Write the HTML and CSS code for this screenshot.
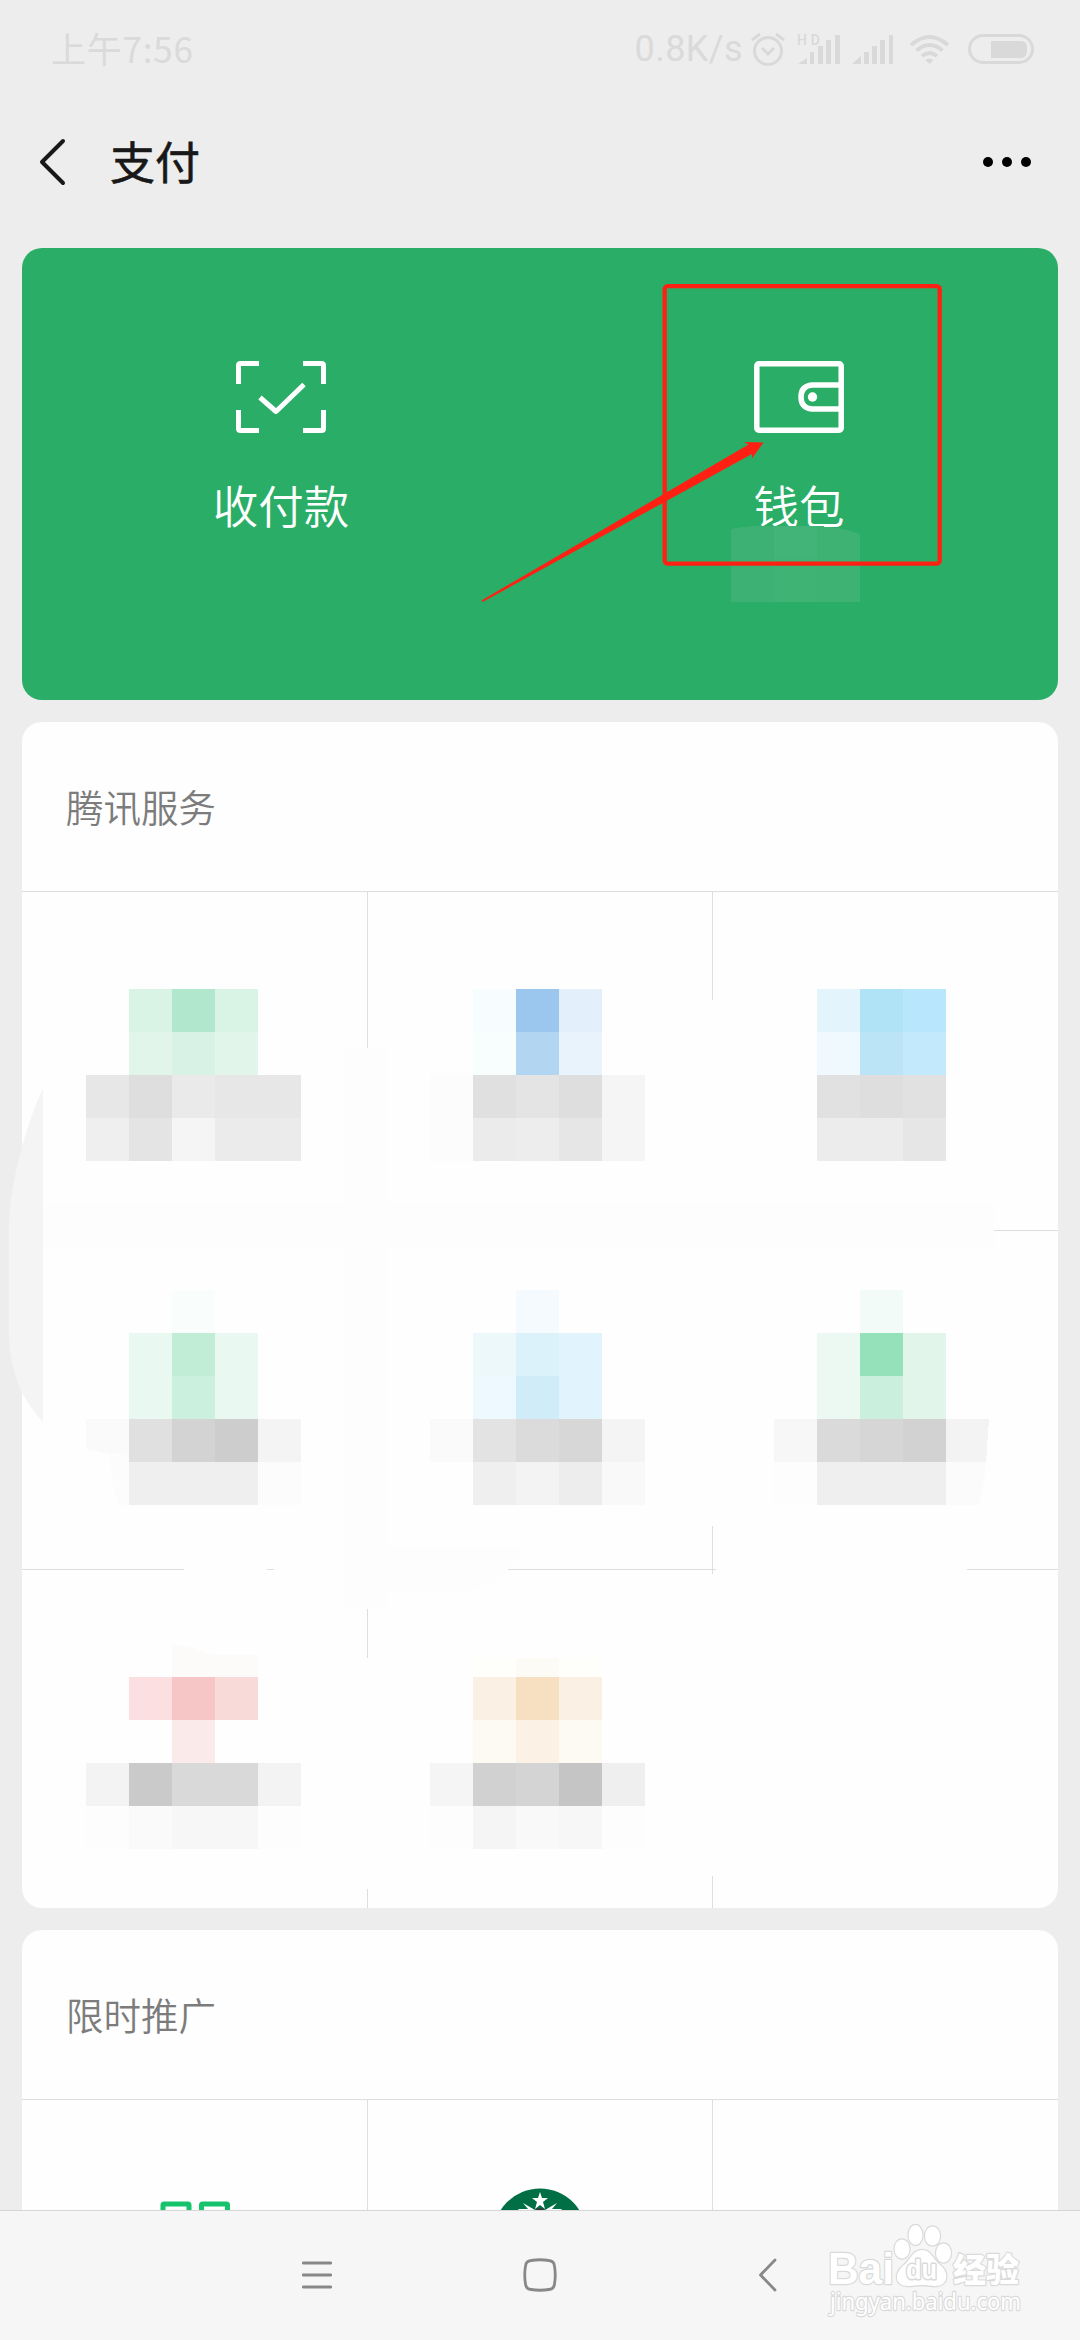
FILE: index.html
```html
<!DOCTYPE html>
<html lang="zh-CN">
<head>
<meta charset="utf-8">
<title>支付</title>
<link rel="stylesheet" href="styles.css">
</head>
<body>
<div class="screen">
  <header class="status">
    <span class="time">上午7:56</span>
    <span class="rate">0.8K/s</span>
    <svg class="status-icons" width="288" height="36" viewBox="0 0 288 36">
      <g fill="none" stroke="#d9d9d9" stroke-width="3">
        <circle cx="18" cy="20" r="13.5"/>
        <path d="M12 17l6 6 6-6M2 9l8-6M26 3l8 6"/>
        <rect x="219.500" y="4.500" width="63" height="27" rx="13.500"/>
        <path d="M161 14q18.500-16 37 0" stroke-width="4"/>
        <path d="M166.500 19.500q13-11 26 0" stroke-width="4"/>
        <path d="M172 25q7.500-6 15 0" stroke-width="4"/>
      </g>
      <g fill="#d9d9d9">
        <path d="M179.500 33l-4-4q4-3 8 0z"/>
        <path d="M241 10h30q6 0 6 6v3q0 8-6 8h-30z"/>
        <path d="M48 33l9-6v6zM60 21h4v12h-4zM68 15h5v18h-5zM76 9h5v24h-5zM85 4h5v29h-5z"/>
        <path d="M102 33l9-8v8zM114 21h5v12h-5zM122 15h5v18h-5zM130 9h5v24h-5zM139 4h4v29h-4z"/>
      </g>
      <text x="47" y="13.500" class="hd" textLength="23">HD</text>
    </svg>
  </header>
  <nav class="title-bar">
    <svg width="28" height="48" viewBox="0 0 28 48"><path d="M25 3L4 24l21 21" fill="none" stroke="#181818" stroke-width="4" stroke-linecap="round" stroke-linejoin="round"/></svg>
    <h1>支付</h1>
    <svg class="more" width="50" height="12" viewBox="0 0 50 12"><circle cx="6" cy="6" r="5"/><circle cx="25" cy="6" r="5"/><circle cx="44" cy="6" r="5"/></svg>
  </nav>
  <main>
    <section class="pay-card">
      <div class="pay-item">
        <svg width="90" height="72" viewBox="0 0 90 72" fill="none" stroke="#fff" stroke-width="5"><path d="M2.500 23V4.500q0-2 2-2H23M67 2.500h18.500q2 0 2 2V23M87.500 49v18.500q0 2-2 2H67M23 69.500H4.500q-2 0-2-2V49"/><path d="M24 36.500l16 14 28-27" stroke-linejoin="round"/></svg>
        <span>收付款</span>
      </div>
      <div class="pay-item">
        <svg width="90" height="72" viewBox="0 0 90 72" fill="none" stroke="#fff" stroke-width="5.500"><rect x="2.800" y="2.800" width="84.400" height="66.400" rx="2"/><path d="M87 24H58q-11 1-11 12t11 12h29"/><circle cx="58.500" cy="36" r="4.700" fill="#fff" stroke="none"/></svg>
        <span>钱包</span>
      </div>
    </section>
    <section class="card services">
      <h2>腾讯服务</h2>
      <div class="grid">
        <div></div><div></div><div></div>
        <div></div><div></div><div></div>
        <div></div><div></div><div></div>
      </div>
    </section>
    <section class="card promo">
      <h2>限时推广</h2>
      <div class="grid">
        <div><svg width="70" height="70" viewBox="0 0 70 70" fill="none" stroke="#14c36c" stroke-width="5"><rect x="3" y="3" width="26" height="26" rx="1"/><rect x="41.500" y="3" width="26" height="26" rx="1"/><rect x="3" y="41" width="26" height="26" rx="1"/></svg></div>
        <div><svg class="coffee" width="94" height="94" viewBox="0 0 94 94"><circle cx="47" cy="47" r="46.500" fill="#006f46"/><path d="M47 4l2 6h6l-5 4 2 7-5-4-5 4 2-7-5-4h6zM25 21l10 0-5-6 12 7q5-3 10 0l12-7-5 6h10L60 31H34z" fill="#fff"/><path d="M42 22q5-4 10 0v3H42z" fill="#333"/></svg></div>
        <div></div>
      </div>
    </section>
  </main>
  <footer class="nav-bar">
    <svg width="30" height="28" viewBox="0 0 30 28"><path d="M1.300 2h27.400M1.300 14h27.400M1.300 26h27.400"/></svg>
    <svg width="34" height="34" viewBox="0 0 34 34"><path d="M8 2.500Q17 1 26 2.500 31 3 31.500 8 33 17 31.500 26 31 31 26 31.500 17 33 8 31.500 3 31 2.500 26 1 17 2.500 8 3 3 8 2.500z"/></svg>
    <svg class="back" width="20" height="34" viewBox="0 0 20 34"><path d="M17 2L2.500 17 17 32"/></svg>
  </footer>

  <svg class="overlay" width="1080" height="2340" viewBox="0 0 1080 2340">
    <!-- smudged areas hiding the grid lines -->
    <g fill="#fefefe">
      <path d="M344 1048h43v561h-43zM344 1658h43v231h-43zM691 1000h43v526h-43zM691 1574h43v302h-43z"/>
      <path d="M43 1204h951v43H43zM184 1560h83v20h-83zM274 1560h230v20H274zM716 1560h251v20H716z"/>
    </g>
    <path d="M43 1204h951v43H43zM344 1048h43v156h-43zM344 1247h43v361h-43zM387 1548h140l-28 32-30 11h-82z" fill="#fdfdfd"/>
    <path d="M43 1089Q33 1108 22 1147 9 1195 9 1226V1340Q12 1390 43 1422z" fill="#f4f4f4"/>

    <g class="tiles">
      <path fill="#d9f3e5" d="M129 989h129v43H129z"/><path fill="#b1e8cd" d="M172 989h43v43h-43z"/>
      <path fill="#e1f5eb" d="M129 1032h129v43H129z"/><path fill="#d8f2e5" d="M172 1032h43v43h-43z"/>
      <path fill="#e7e7e7" d="M86 1075h43v43H86zM215 1075h86v43h-86z"/><path fill="#dedede" d="M129 1075h43v43h-43z"/><path fill="#eaeaea" d="M172 1075h43v43h-43z"/>
      <path fill="#efefef" d="M86 1118h43v43H86z"/><path fill="#e4e4e4" d="M129 1118h43v43h-43z"/><path fill="#f5f5f5" d="M172 1118h43v43h-43z"/><path fill="#ebebeb" d="M215 1118h86v43h-86z"/>

      <path fill="#f7fcff" d="M473 989h43v43h-43z"/><path fill="#9bc7ef" d="M516 989h43v43h-43z"/><path fill="#e3f0fb" d="M559 989h43v43h-43z"/>
      <path fill="#f8fefe" d="M473 1032h43v43h-43z"/><path fill="#b2d5f2" d="M516 1032h43v43h-43z"/><path fill="#e8f3fb" d="M559 1032h43v43h-43z"/>
      <path fill="#fcfcfc" d="M430 1075h43v86h-43z"/><path fill="#e0e0e0" d="M473 1075h43v43h-43z"/><path fill="#e4e4e4" d="M516 1075h43v43h-43z"/><path fill="#dedede" d="M559 1075h43v43h-43z"/><path fill="#f5f5f5" d="M602 1075h43v86h-43z"/>
      <path fill="#ebebeb" d="M473 1118h43v43h-43z"/><path fill="#ededed" d="M516 1118h43v43h-43z"/><path fill="#e6e6e6" d="M559 1118h43v43h-43z"/>

      <path fill="#e3f4fc" d="M817 989h43v43h-43z"/><path fill="#b1e3f7" d="M860 989h43v43h-43z"/><path fill="#b8e7fd" d="M903 989h43v43h-43z"/>
      <path fill="#f0f9fd" d="M817 1032h43v43h-43z"/><path fill="#bbe5f7" d="M860 1032h43v43h-43z"/><path fill="#c3e9fc" d="M903 1032h43v43h-43z"/>
      <path fill="#e1e1e1" d="M817 1075h129v43H817z"/><path fill="#dedede" d="M860 1075h43v43h-43z"/>
      <path fill="#ececec" d="M817 1118h86v43h-86z"/><path fill="#e6e6e6" d="M903 1118h43v43h-43z"/>

      <path fill="#f9fdfc" d="M172 1290h43v43h-43z"/><path fill="#e9f8f1" d="M129 1333h129v86H129z"/><path fill="#c1edd6" d="M172 1333h43v43h-43z"/><path fill="#cbf0de" d="M172 1376h43v43h-43z"/>
      <path fill="#fafafa" d="M86 1419h43v36l-19-1q-12-2-24-5z"/><path fill="#e0e0e0" d="M129 1419h43v43h-43z"/><path fill="#d3d3d3" d="M172 1419h43v43h-43z"/><path fill="#cdcdcd" d="M215 1419h43v43h-43z"/><path fill="#f4f4f4" d="M258 1419h43v43h-43z"/>
      <path fill="#fcfcfc" d="M110 1455h19v50h-10q-9-20-9-50zM258 1462h43v43h-43z"/><path fill="#efefef" d="M129 1462h129v43H129z"/>

      <path fill="#f4fafe" d="M516 1290h43v43h-43z"/><path fill="#ecf8fa" d="M473 1333h43v43h-43z"/><path fill="#dbf2fa" d="M516 1333h43v43h-43z"/><path fill="#e1f3fc" d="M559 1333h43v86h-43z"/><path fill="#edf9fe" d="M473 1376h43v43h-43z"/><path fill="#d0ecf9" d="M516 1376h43v43h-43z"/>
      <path fill="#fafafa" d="M430 1419h43v43h-43z"/><path fill="#e3e3e3" d="M473 1419h43v43h-43z"/><path fill="#dbdbdb" d="M516 1419h43v43h-43z"/><path fill="#d7d7d7" d="M559 1419h43v43h-43z"/><path fill="#f4f4f4" d="M602 1419h43v43h-43z"/>
      <path fill="#efefef" d="M473 1462h43v43h-43z"/><path fill="#f3f3f3" d="M516 1462h43v43h-43z"/><path fill="#ededed" d="M559 1462h43v43h-43z"/><path fill="#f9f9f9" d="M602 1462h43v43h-43z"/>

      <path fill="#f2fbf7" d="M860 1290h43v43h-43z"/><path fill="#ebf9f2" d="M817 1333h43v86h-43z"/><path fill="#94e1ba" d="M860 1333h43v43h-43z"/><path fill="#e2f5ea" d="M903 1333h43v86h-43z"/><path fill="#caefdd" d="M860 1376h43v43h-43z"/>
      <path fill="#f7f7f7" d="M774 1419h43v43h-43z"/><path fill="#dadada" d="M817 1419h43v43h-43z"/><path fill="#d6d6d6" d="M860 1419h43v43h-43z"/><path fill="#d2d2d2" d="M903 1419h43v43h-43z"/><path fill="#f3f3f3" d="M946 1419h43l-3 43h-40z"/>
      <path fill="#fdfdfd" d="M774 1462h43v43h-43z"/><path fill="#efefef" d="M817 1462h129v43H817z"/><path fill="#fbfbfb" d="M946 1462h40q-2 25-7 43h-33z"/>

      <path fill="#fdfbf9" d="M172 1645q25 2 40 10h46v22h-86z"/><path fill="#fbdfe1" d="M129 1677h43v43h-43z"/><path fill="#f6c6c7" d="M172 1677h43v43h-43z"/><path fill="#f8dad8" d="M215 1677h43v43h-43z"/><path fill="#faeaea" d="M172 1720h43v43h-43z"/>
      <path fill="#f3f3f3" d="M86 1763h43v43H86zM258 1763h43v43h-43z"/><path fill="#cacaca" d="M129 1763h43v43h-43z"/><path fill="#d9d9d9" d="M172 1763h86v43h-86z"/>
      <path fill="#fdfdfd" d="M86 1806h43v43H86zM258 1806h43v43h-43z"/><path fill="#fafafa" d="M129 1806h43v43h-43z"/><path fill="#f7f7f7" d="M172 1806h86v43h-86z"/>

      <path fill="#fefefb" d="M473 1658h129v19H473z"/><path fill="#fcfbf6" d="M516 1658h43v19h-43z"/><path fill="#fbf0e4" d="M473 1677h129v43H473z"/><path fill="#f7e0c2" d="M516 1677h43v43h-43z"/>
      <path fill="#fdfaf4" d="M473 1720h129v43H473z"/><path fill="#fbf1e5" d="M516 1720h43v43h-43z"/>
      <path fill="#f5f5f5" d="M430 1763h43v43h-43z"/><path fill="#d1d1d1" d="M473 1763h43v43h-43z"/><path fill="#d4d4d4" d="M516 1763h43v43h-43z"/><path fill="#c5c5c5" d="M559 1763h43v43h-43z"/><path fill="#efefef" d="M602 1763h43v43h-43z"/>
      <path fill="#fdfdfd" d="M430 1806h215v43H430z"/><path fill="#f5f5f5" d="M473 1806h43v43h-43z"/><path fill="#f9f9f9" d="M516 1806h43v43h-43z"/><path fill="#f7f7f7" d="M559 1806h43v43h-43z"/>

      <path fill="#3cb173" d="M731 529q20-4 43-3v76h-43z"/><path fill="#43b477" d="M774 526h43v33h-43z"/><path fill="#3fb374" d="M774 559h43v43h-43z"/><path fill="#3eb273" d="M817 526q25 1 43 8v68h-43z"/>
    </g>

    <rect x="664.700" y="286.200" width="275" height="277.500" rx="3" fill="none" stroke="#fe2113" stroke-width="4.300"/>
    <path d="M763.500 442.500L744 442l4.500 2.500L481.500 600.500l1 1.500L752 454v4.500z" fill="#fe2113"/>

    <g class="watermark">
      <text x="828" y="2284" class="wm-brand" textLength="66" lengthAdjust="spacingAndGlyphs">Bai</text>
      <g>
        <ellipse cx="902" cy="2249" rx="7.500" ry="9.500"/><ellipse cx="915.500" cy="2235" rx="7" ry="10"/><ellipse cx="932.500" cy="2236" rx="7.500" ry="9.500"/><ellipse cx="943.500" cy="2253" rx="7.500" ry="9.500"/>
        <path d="M922 2250c9 0 11 9 17 14 11 8 9 22-3 22-7 0-8-1-14-1s-8 1-14 1c-13 0-15-12-4-21 7-6 9-15 18-15z"/>
      </g>
      <text x="906" y="2279" class="wm-du" textLength="31" lengthAdjust="spacingAndGlyphs">du</text>
      <text x="953" y="2282" class="wm-cn">经验</text>
      <text x="830" y="2310" class="wm-url" textLength="191" lengthAdjust="spacingAndGlyphs">jingyan.baidu.com</text>
    </g>
  </svg>
</div>
</body>
</html>
```
FILE: styles.css
```css
* { box-sizing: border-box; }
body { margin: 0; background: #ededed; font-family: "Noto Sans CJK SC", "Noto Sans", sans-serif; }
h1, h2 { margin: 0; }
svg { display: block; flex: none; }
.screen { position: relative; width: 1080px; height: 2340px; overflow: hidden; display: flex; flex-direction: column; }

.status { height: 97px; flex: none; display: flex; align-items: center; padding: 0 42px 0 51px; color: #dadada; }
.time { font-size: 35px; font-weight: 400; letter-spacing: 0.8px; line-height: 50px; padding-bottom: 2px; }
.rate { margin-left: auto; margin-right: 7px; font: 36px "Roboto", sans-serif; letter-spacing: 0.4px; }
.hd { font: 500 14px "Roboto", sans-serif; fill: #d9d9d9; }

.title-bar { height: 130px; flex: none; display: flex; align-items: center; padding: 0 48px 0 38px; }
.title-bar h1 { margin-left: 44px; font-size: 45px; font-weight: 400; -webkit-text-stroke: 0.6px #181818; line-height: 60px; padding-bottom: 2px; color: #181818; }
.more { margin-left: auto; }

main { flex: 1; min-height: 0; overflow: hidden; display: flex; flex-direction: column; gap: 22px; padding: 21px 22px 0; }
.pay-card { height: 452px; flex: none; display: grid; grid-template-columns: 1fr 1fr; background: #2aae67; border-radius: 20px; }
.pay-item { display: flex; flex-direction: column; align-items: center; gap: 38px; padding-top: 113px; color: #fff; font-size: 45.5px; line-height: 66px; font-weight: 350; }
.card { flex: none; background: #fefefe; border-radius: 20px; overflow: hidden; }
.card h2 { height: 170px; padding: 0 44px; border-bottom: 1px solid #dedede; font-size: 37.5px; line-height: 168px; font-weight: 350; color: #7c7c7c; }
.grid { display: grid; grid-template-columns: 346px 345px 345px; grid-auto-rows: 339px; }
.services .grid { grid-template-rows: 339px 339px 338px; }
.grid > div { display: flex; justify-content: center; border-right: 1px solid #dedede; border-bottom: 1px solid #dedede; }
.grid > div:nth-child(3n) { border-right: 0; }
.grid > div:nth-child(n+7) { border-bottom: 0; }
.promo .grid > div { padding-top: 101px; }
.promo .grid > div:nth-child(2) { padding-top: 88px; }

.nav-bar { height: 130px; flex: none; display: flex; align-items: center; gap: 191px; padding: 0 0 1px 302px; background: #f6f6f6; border-top: 1px solid #d6d6d6; }
.nav-bar path { fill: none; stroke: #888; stroke-width: 2.800; stroke-linecap: round; stroke-linejoin: round; }
.nav-bar .back { margin-left: 10px; }

.overlay { position: absolute; left: 0; top: 0; pointer-events: none; }
.tiles { shape-rendering: crispEdges; }
.watermark { fill: #fff; stroke: #dadada; stroke-width: 2.400; paint-order: stroke; stroke-linejoin: round; }
.wm-brand { font: bold 44px "Liberation Sans", sans-serif; }
.wm-du { font: bold 27px "Liberation Sans", sans-serif; stroke-width: 3; }
.wm-cn { font: 900 33px "Noto Sans CJK SC", sans-serif; }
.wm-url { font: 24px "Noto Sans", sans-serif; }
```
